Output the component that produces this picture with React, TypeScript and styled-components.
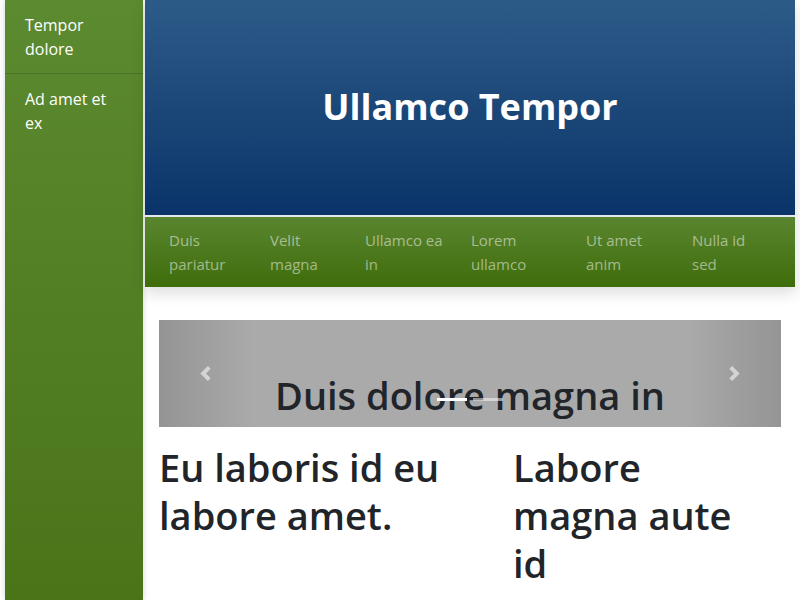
import React from "react";
import styled, { createGlobalStyle } from "styled-components";

const GlobalStyle = createGlobalStyle`
  html, body { margin: 0; padding: 0; background: #fff; }
  body { font-family: "Open Sans", "Noto Sans", sans-serif; color: #212529; }
  * { box-sizing: border-box; }
`;

const Page = styled.div`
  display: flex;
  gap: 2px;
  padding-left: 5px;
  width: 800px;
  height: 600px;
  overflow: hidden;
`;

const Sidebar = styled.nav`
  width: 138px;
  flex: none;
  background: linear-gradient(180deg, #5c8a30 0%, #4a7418 100%);
  box-shadow: 0 0 6px rgba(0, 0, 0, 0.18);
`;

const SideItem = styled.div`
  padding: 13px 20px 12px;
  color: #fff;
  font-size: 16px;
  line-height: 24px;
  & + & { border-top: 1px solid rgba(0, 0, 0, 0.15); }
`;

const Main = styled.main`
  width: 650px;
  flex: none;
  display: flex;
  flex-direction: column;
`;

const HeaderCard = styled.div`
  box-shadow: 0 6px 14px rgba(0, 0, 0, 0.14);
`;

const Hero = styled.header`
  height: 217px;
  display: flex;
  align-items: center;
  justify-content: center;
  background: linear-gradient(180deg, #2d5b88 0%, #0a3469 100%);
  border-bottom: 2px solid #e3e8ee;
`;

const HeroTitle = styled.h1`
  margin: 0 0 2px;
  color: #fff;
  font-size: 36px;
  font-weight: 700;
  line-height: 1.2;
`;

const NavBar = styled.div`
  height: 70px;
  display: flex;
  padding: 11px 0 0 8px;
  background: linear-gradient(180deg, #5a8530 0%, #3f6d0a 100%);
`;

const NavItem = styled.a<{ $w: number }>`
  width: ${(p) => p.$w}px;
  flex: none;
  padding: 0 6px 0 16px;
  color: rgba(255, 255, 255, 0.5);
  font-size: 15px;
  line-height: 24px;
  text-decoration: none;
`;

const Content = styled.section`
  padding: 33px 14px 0;
`;

const Carousel = styled.div`
  position: relative;
  height: 107px;
  background: #aaa;
  overflow: hidden;
`;

const Control = styled.div<{ $side: "left" | "right" }>`
  position: absolute;
  top: 0;
  bottom: 0;
  ${(p) => p.$side}: 0;
  width: 15%;
  display: flex;
  align-items: center;
  justify-content: center;
  opacity: 0.5;
  background: linear-gradient(
    ${(p) => (p.$side === "left" ? "90deg" : "270deg")},
    rgba(0, 0, 0, 0.25) 0%,
    rgba(0, 0, 0, 0.001) 100%
  );
`;

const Caption = styled.h1`
  position: absolute;
  left: 15%;
  right: 15%;
  bottom: 8px;
  margin: 0;
  text-align: center;
  font-size: 38px;
  font-weight: 600;
  line-height: 48px;
  color: #212529;
  white-space: nowrap;
`;

const Indicators = styled.div`
  position: absolute;
  left: 0;
  right: 0;
  bottom: 26px;
  display: flex;
  justify-content: center;
  gap: 6px;
`;

const Indicator = styled.span<{ $active?: boolean }>`
  width: 30px;
  height: 3px;
  background: #fff;
  opacity: ${(p) => (p.$active ? 1 : 0.5)};
`;

const Columns = styled.div`
  display: grid;
  grid-template-columns: 354px 230px;
  padding-top: 16px;
`;

const ColHeading = styled.h1`
  margin: 0;
  font-size: 38px;
  font-weight: 600;
  line-height: 48px;
  color: #212529;
`;

const Chevron = ({ dir }: { dir: "prev" | "next" }) => (
  <svg width="15" height="15" viewBox="0 0 8 8" fill="#fff">
    {dir === "prev" ? (
      <path d="M5.25 0l-4 4 4 4 1.5-1.5L4.25 4l2.5-2.5L5.25 0z" />
    ) : (
      <path d="M2.75 0l-1.5 1.5L3.75 4l-2.5 2.5L2.75 8l4-4-4-4z" />
    )}
  </svg>
);

const navItems: [string, number][] = [
  ["Duis pariatur", 101],
  ["Velit magna", 95],
  ["Ullamco ea in", 106],
  ["Lorem ullamco", 115],
  ["Ut amet anim", 106],
  ["Nulla id sed", 96],
];

export default function App() {
  return (
    <>
      <GlobalStyle />
      <Page>
        <Sidebar>
          <SideItem>Tempor dolore</SideItem>
          <SideItem>Ad amet et ex</SideItem>
        </Sidebar>
        <Main>
          <HeaderCard>
            <Hero>
              <HeroTitle>Ullamco Tempor</HeroTitle>
            </Hero>
            <NavBar>
              {navItems.map(([label, w]) => (
                <NavItem key={label} $w={w} href="#">
                  {label}
                </NavItem>
              ))}
            </NavBar>
          </HeaderCard>
          <Content>
            <Carousel>
              <Caption>Duis dolore magna in</Caption>
              <Indicators>
                <Indicator $active />
                <Indicator />
              </Indicators>
              <Control $side="left">
                <Chevron dir="prev" />
              </Control>
              <Control $side="right">
                <Chevron dir="next" />
              </Control>
            </Carousel>
            <Columns>
              <ColHeading>Eu laboris id eu labore amet.</ColHeading>
              <ColHeading>Labore magna aute id</ColHeading>
            </Columns>
          </Content>
        </Main>
      </Page>
    </>
  );
}
